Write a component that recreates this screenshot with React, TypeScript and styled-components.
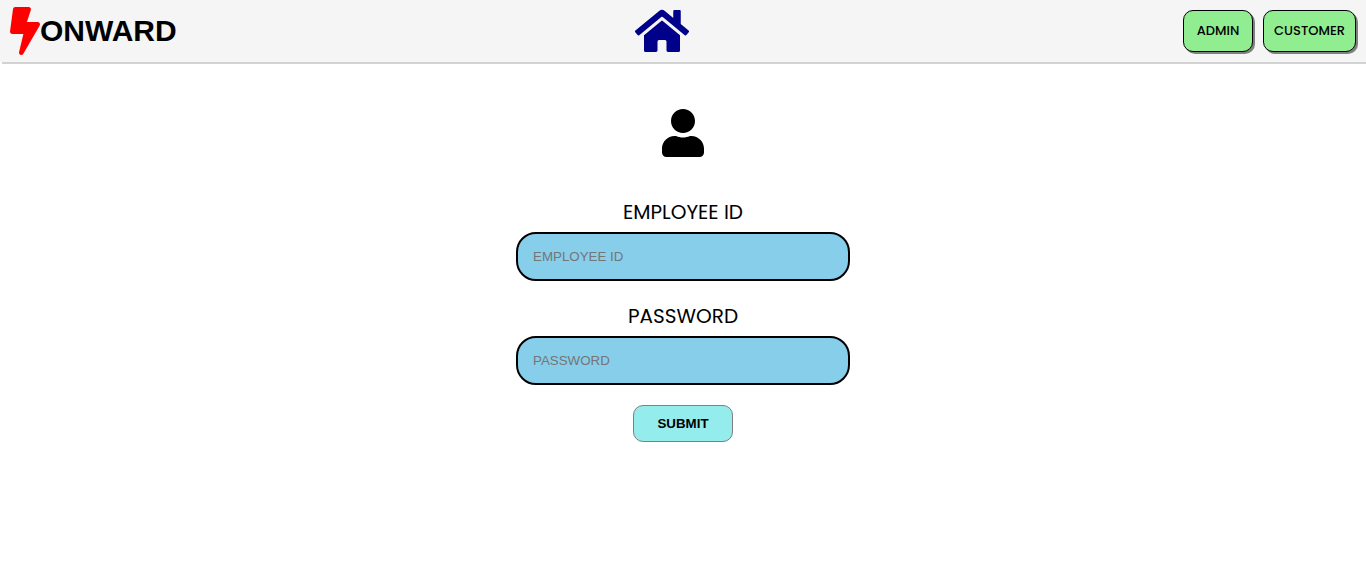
import React from "react";
import styled, { createGlobalStyle } from "styled-components";
import { FaBolt, FaHome, FaUser } from "react-icons/fa";

const GlobalStyle = createGlobalStyle`
  * { box-sizing: border-box; }
  body { margin: 0; background: white; color: black; }
`;

const labelFont = `Poppins, Inter, sans-serif`;
const controlFont = `Arial, "Liberation Sans", sans-serif`;

const Header = styled.header`
  display: grid;
  grid-template-columns: 1fr auto 1fr;
  align-items: center;
  height: 62px;
  padding: 0 10px;
  background: whitesmoke;
  box-shadow: 2px 2px 0 lightgray;
`;

const Brand = styled.a`
  display: flex;
  align-items: center;
  justify-self: start;
  color: black;
  font: bold 30px ${controlFont};
  text-decoration: none;
`;

const BoltIcon = styled(FaBolt)`
  width: 30px;
  height: 48px;
  color: red;
`;

const HomeLink = styled.a`
  display: flex;
  padding-right: 42px;
  color: darkblue;
`;

const HomeIcon = styled(FaHome)`
  width: 54px;
  height: 48px;
`;

const Nav = styled.nav`
  display: flex;
  justify-content: flex-end;
  gap: 10px;
`;

const NavButton = styled.button<{ $width: number }>`
  width: ${({ $width }) => $width}px;
  height: 42px;
  padding: 0;
  border: 1px solid black;
  border-radius: 10px;
  background: lightgreen;
  box-shadow: 2px 2px 0 gray;
  color: black;
  font: 500 13px ${labelFont};
`;

const LoginForm = styled.form`
  display: flex;
  flex-direction: column;
  align-items: center;
  gap: 20px;
  padding: 47px 16px 20px;
`;

const Avatar = styled.div`
  display: flex;
  margin-bottom: 20px;
`;

const Field = styled.div`
  display: flex;
  flex-direction: column;
  align-items: center;
  gap: 5px;
  width: 100%;
`;

const Label = styled.label`
  font: 400 20px/30px ${labelFont};
`;

const Input = styled.input`
  width: 100%;
  max-width: 334px;
  height: 49px;
  padding: 15px;
  border: 2px solid black;
  border-radius: 20px;
  background: skyblue;
  font-family: ${controlFont};

  &::placeholder { color: #757575; }
`;

const Submit = styled.button`
  width: 100px;
  height: 37px;
  border: 1px solid gray;
  border-radius: 10px;
  background: #94ecec;
  color: black;
  font-family: ${controlFont};
  font-weight: bold;
`;

export default function App() {
  return (
    <>
      <GlobalStyle />
      <Header>
        <Brand href="#">
          <BoltIcon />
          ONWARD
        </Brand>
        <HomeLink href="#" aria-label="Home">
          <HomeIcon />
        </HomeLink>
        <Nav>
          <NavButton type="button" $width={70}>ADMIN</NavButton>
          <NavButton type="button" $width={93}>CUSTOMER</NavButton>
        </Nav>
      </Header>
      <main>
        <LoginForm onSubmit={(event) => event.preventDefault()}>
          <Avatar>
            <FaUser size={48} />
          </Avatar>
          <Field>
            <Label htmlFor="employee-id">EMPLOYEE ID</Label>
            <Input id="employee-id" type="text" placeholder="EMPLOYEE ID" />
          </Field>
          <Field>
            <Label htmlFor="password">PASSWORD</Label>
            <Input id="password" type="password" placeholder="PASSWORD" />
          </Field>
          <Submit type="submit">SUBMIT</Submit>
        </LoginForm>
      </main>
    </>
  );
}
